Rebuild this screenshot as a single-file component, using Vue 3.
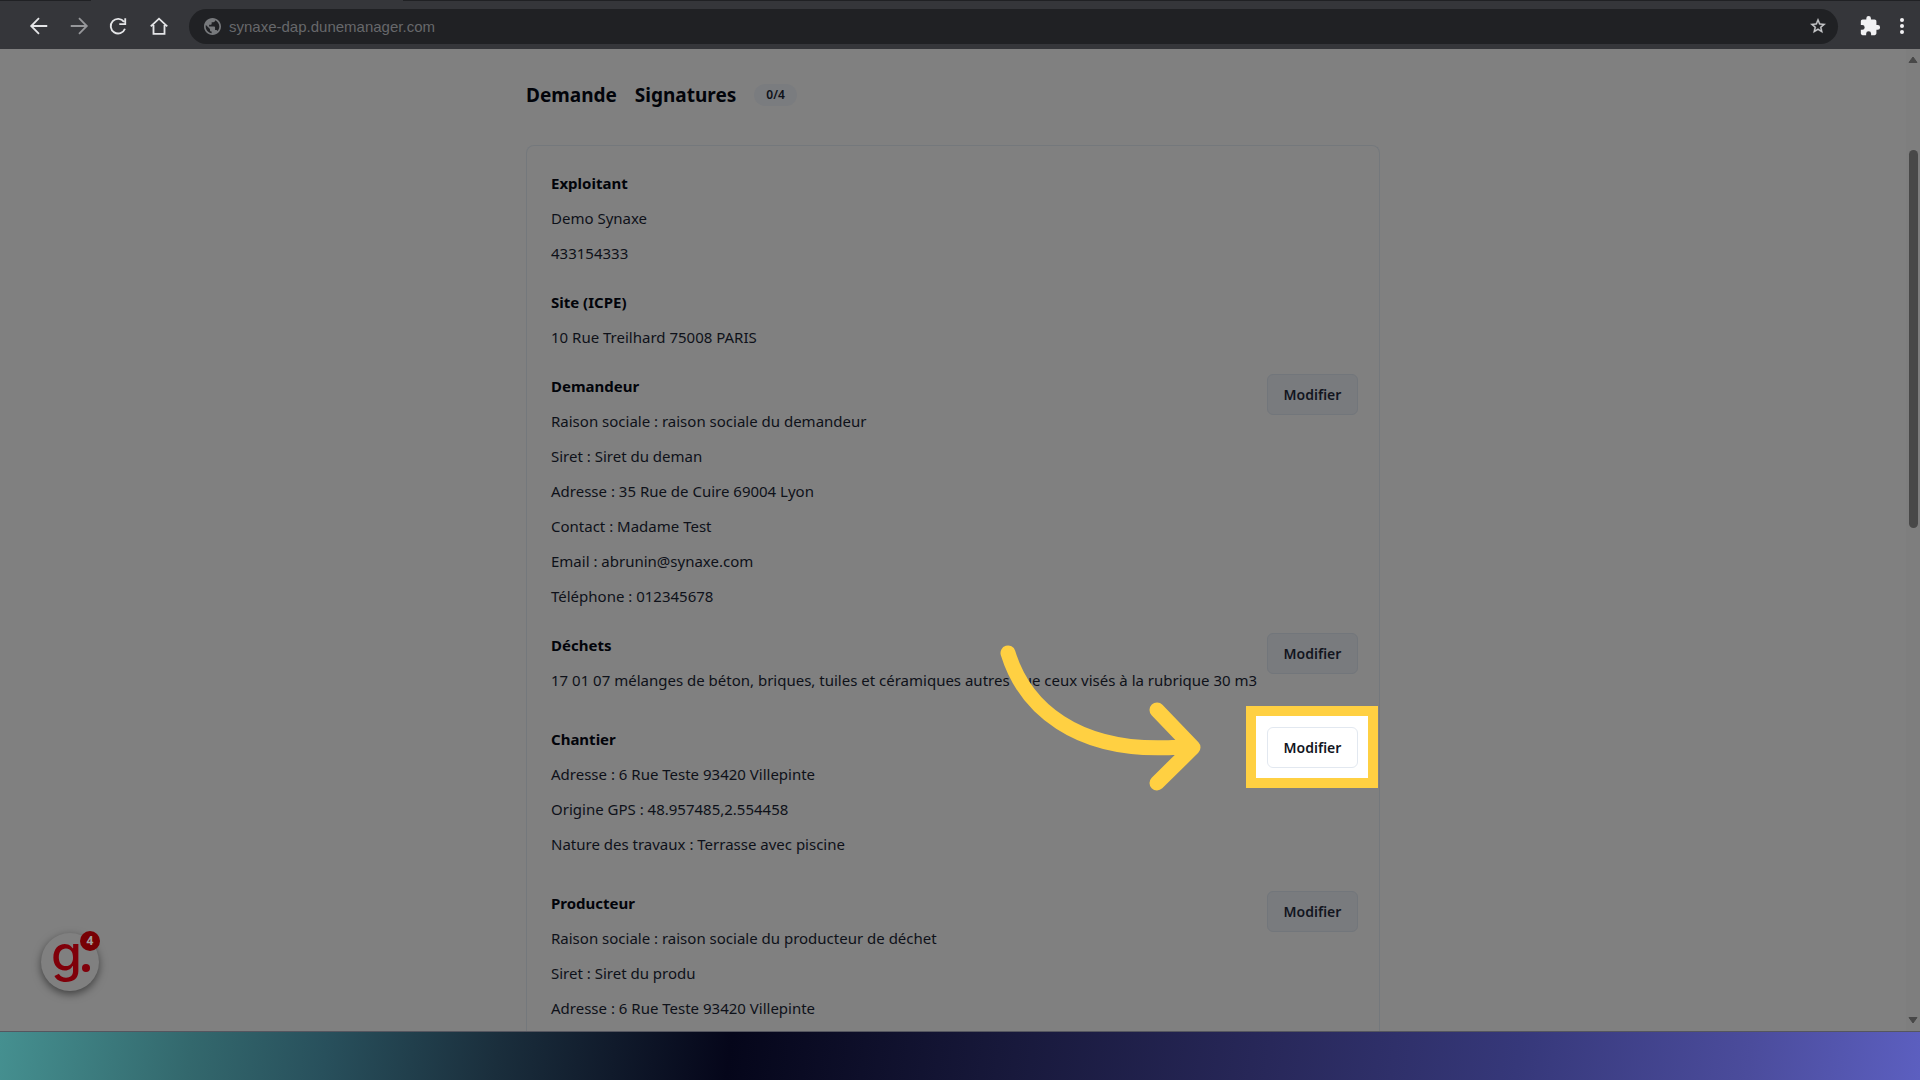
<script setup>
import { ref } from "vue";

const url = ref("synaxe-dap.dunemanager.com");

const sections = ref([
  {
    title: "Exploitant",
    lines: ["Demo Synaxe", "433154333"],
  },
  {
    title: "Site (ICPE)",
    lines: ["10 Rue Treilhard 75008 PARIS"],
  },
  {
    title: "Demandeur",
    editable: true,
    lines: [
      "Raison sociale : raison sociale du demandeur",
      "Siret : Siret du deman",
      "Adresse : 35 Rue de Cuire 69004 Lyon",
      "Contact : Madame Test",
      "Email : abrunin@synaxe.com",
      "Téléphone : 012345678",
    ],
  },
  {
    title: "Déchets",
    editable: true,
    spaced: true,
    lines: ["17 01 07 mélanges de béton, briques, tuiles et céramiques autres que ceux visés à la rubrique 30 m3"],
  },
  {
    title: "Chantier",
    editable: true,
    spaced: true,
    active: true,
    lines: [
      "Adresse : 6 Rue Teste 93420 Villepinte",
      "Origine GPS : 48.957485,2.554458",
      "Nature des travaux : Terrasse avec piscine",
    ],
  },
  {
    title: "Producteur",
    editable: true,
    lines: [
      "Raison sociale : raison sociale du producteur de déchet",
      "Siret : Siret du produ",
      "Adresse : 6 Rue Teste 93420 Villepinte",
    ],
  },
]);
</script>

<template>
  <div class="screen">
    <header class="toolbar">
      <nav class="nav">
        <button class="icon-btn" aria-label="Back">
          <svg viewBox="0 0 24 24"><path d="M21 12H4M12 3.500L3.500 12l8.500 8.500" /></svg>
        </button>
        <button class="icon-btn muted" aria-label="Forward">
          <svg viewBox="0 0 24 24"><path d="M3 12h17M12 3.500l8.500 8.500-8.500 8.500" /></svg>
        </button>
        <button class="icon-btn" aria-label="Reload">
          <svg viewBox="0 0 24 24"><path d="M17.500 7.500A8 8 0 1 0 18.500 15M18.800 3.500v6.500h-6.500" /></svg>
        </button>
        <button class="icon-btn" aria-label="Home">
          <svg viewBox="0 0 24 24"><path d="M3 12.500L12 4l9 8.500M6 11v9.500h12V11" /></svg>
        </button>
      </nav>
      <div class="address">
        <svg class="globe" viewBox="2 2 20 20">
          <path d="M12 2C6.480 2 2 6.480 2 12s4.480 10 10 10 10-4.480 10-10S17.520 2 12 2zm-1 17.930c-3.950-.49-7-3.850-7-7.930 0-.62.080-1.210.210-1.790L9 15v1c0 1.100.9 2 2 2v1.930zm6.900-2.540c-.26-.81-1-1.390-1.900-1.390h-1v-3c0-.55-.45-1-1-1H8v-2h2c.55 0 1-.45 1-1V7h2c1.100 0 2-.9 2-2v-.41c2.930 1.190 5 4.060 5 7.410 0 2.080-.8 3.970-2.100 5.390z" />
        </svg>
        <input v-model="url" type="text" class="url" aria-label="Address" />
        <button class="star" aria-label="Bookmark">
          <svg viewBox="0 0 24 24">
            <path d="M22 9.240l-7.190-.62L12 2 9.190 8.630 2 9.240l5.460 4.730L5.820 21 12 17.270 18.180 21l-1.630-7.030L22 9.240zM12 15.400l-3.760 2.270 1-4.280-3.320-2.880 4.380-.38L12 6.100l1.710 4.040 4.380.38-3.320 2.880 1 4.280L12 15.400z" />
          </svg>
        </button>
      </div>
      <button class="tool-btn" aria-label="Extensions">
        <svg class="puzzle" viewBox="0 0 24 24">
          <path d="M20.500 11H19V7c0-1.100-.9-2-2-2h-4V3.500a2.500 2.500 0 0 0-5 0V5H4c-1.100 0-2 .9-2 2v3.800h1.500a2.700 2.700 0 0 1 0 5.400H2V20c0 1.100.9 2 2 2h3.800v-1.500a2.700 2.700 0 0 1 5.400 0V22H17c1.100 0 2-.9 2-2v-4h1.500a2.500 2.500 0 0 0 0-5z" />
        </svg>
      </button>
      <button class="tool-btn" aria-label="Menu">
        <svg class="dots" viewBox="0 0 6 20">
          <circle cx="3" cy="4" r="2" /><circle cx="3" cy="10" r="2" /><circle cx="3" cy="16" r="2" />
        </svg>
      </button>
    </header>

    <div class="page">
      <main class="content">
        <nav class="tabs">
          <a href="#demande">Demande</a>
          <a href="#signatures">Signatures</a>
          <span class="count">0/4</span>
        </nav>

        <div class="card">
          <section v-for="section in sections" :key="section.title" class="section" :class="{ spaced: section.spaced }">
            <div class="text">
              <h2>{{ section.title }}</h2>
              <p v-for="line in section.lines" :key="line">{{ line }}</p>
            </div>
            <div v-if="section.editable" class="action" :class="{ active: section.active }">
              <button class="edit">Modifier</button>
              <svg v-if="section.active" class="arrow" viewBox="0 0 200 146">
                <path d="M8 8C24 60 74 110 180 102M157 65l36 37.500-36 35.500" />
              </svg>
            </div>
          </section>
        </div>
      </main>

      <div class="scrollbar">
        <svg class="tri" viewBox="0 0 10 8"><path d="M5 1L9 6.500H1z" /></svg>
        <div class="track"><div class="thumb"></div></div>
        <svg class="tri" viewBox="0 0 10 8"><path d="M5 7L1 1.500h8z" /></svg>
      </div>

      <button class="widget" aria-label="Guides">
        <span class="letter">g</span>
        <span class="dot"></span>
        <span class="badge">4</span>
      </button>
    </div>

    <footer class="backdrop"></footer>
  </div>
</template>

<style>
body {
  background: #808080;
}
</style>

<style scoped>
.screen {
  min-height: 100vh;
  display: flex;
  flex-direction: column;
  font-family: "Noto Sans", "Open Sans", sans-serif;
  color: #0e1119;
}

button {
  font-family: inherit;
  padding: 0;
  border: 0;
  background: none;
  cursor: pointer;
}

/* browser toolbar */
.toolbar {
  display: flex;
  align-items: center;
  height: 49px;
  padding: 3px 10px 0 24px;
  box-sizing: border-box;
  background:
    linear-gradient(90deg, #202124 91px, transparent 91px, transparent 403px, #202124 403px) top / 100% 1px no-repeat,
    #35363a;
}

.nav {
  display: flex;
  gap: 10px;
  margin-right: 15px;
}

.icon-btn {
  display: flex;
  align-items: center;
  justify-content: center;
  width: 30px;
  height: 30px;
}

.icon-btn svg {
  width: 22px;
  height: 22px;
  fill: none;
  stroke: #e4e5e7;
  stroke-width: 2;
}

.icon-btn.muted svg {
  stroke: #96979a;
}

.address {
  flex: 1;
  display: flex;
  align-items: center;
  height: 35px;
  padding: 0 11px 0 15px;
  box-sizing: border-box;
  border-radius: 18px;
  background: #202124;
}

.globe {
  width: 17px;
  height: 17px;
  fill: #77797c;
}

.url {
  flex: 1;
  min-width: 0;
  margin-left: 8px;
  padding: 0;
  border: 0;
  outline: 0;
  background: none;
  font-family: "Liberation Sans", sans-serif;
  font-size: 15px;
  color: #67686b;
}

.star svg {
  display: block;
  width: 18px;
  height: 18px;
  fill: #c8c9cb;
  stroke: #c8c9cb;
  stroke-width: 0.5;
}

.tool-btn {
  display: flex;
  justify-content: center;
  width: 24px;
  margin-left: 20px;
}

.tool-btn + .tool-btn {
  width: 16px;
  margin-left: 12px;
}

.puzzle {
  width: 22px;
  height: 22px;
  fill: #f1f1f3;
}

.dots {
  width: 6px;
  height: 20px;
  fill: #f1f1f3;
}

/* page */
.page {
  position: relative;
  flex: 1;
  display: flex;
  background: #808080;
  border-bottom: 1px solid #55565f;
}

.content {
  flex: 1;
  max-width: 854px;
  margin: 0 auto;
  display: flex;
  flex-direction: column;
}

.tabs {
  display: flex;
  align-items: center;
  gap: 18px;
  height: 28px;
  padding: 32px 0 36px;
}

.tabs a {
  font-size: 19px;
  font-weight: 700;
  color: #02040a;
  text-decoration: none;
}

.count {
  padding: 0 12px;
  border-radius: 11px;
  background: #7a7c7f;
  font-size: 12px;
  font-weight: 600;
  line-height: 22px;
}

.card {
  flex: 1;
  padding: 20px 21px 4px 24px;
  border: 1px solid #74787c;
  border-bottom: 0;
  border-radius: 8px 8px 0 0;
}

.section {
  position: relative;
  padding-bottom: 14px;
}

.section.spaced {
  padding-bottom: 24px;
}

.section:last-child {
  padding-bottom: 0;
}

h2,
p {
  margin: 0;
  font-size: 15px;
  line-height: 35px;
}

h2 {
  font-weight: 700;
  color: #02040a;
}

p {
  font-weight: 400;
}

/* sits over the text so that a long line can run below it */
.action {
  position: absolute;
  top: 5px;
  right: 0;
}

.edit {
  position: relative;
  display: block;
  width: 91px;
  height: 41px;
  border: 1px solid #72767b;
  border-radius: 6px;
  background: #797b7e;
  font-size: 14px;
  font-weight: 600;
  color: #12151e;
}

.active::before {
  content: "";
  position: absolute;
  inset: -21px -20px -20px -21px;
  border: 10px solid #ffd042;
  background: #fff;
}

.active .edit {
  border-color: #e2e8f0;
  background: #fff;
}

.arrow {
  position: absolute;
  top: -82px;
  right: 158px;
  width: 200px;
  height: 146px;
  overflow: visible;
  fill: none;
  stroke: #ffd042;
  stroke-width: 15;
  stroke-linecap: round;
  stroke-linejoin: round;
}

.scrollbar {
  display: flex;
  flex-direction: column;
  align-items: center;
  width: 14px;
  padding: 7px 0;
  background: #7e7e7e;
}

.tri {
  width: 10px;
  height: 8px;
  fill: #484848;
  stroke: #484848;
  stroke-width: 1;
  stroke-linejoin: round;
}

.track {
  flex: 1;
  display: flex;
  flex-direction: column;
}

.track::before {
  content: "";
  flex: 86;
}

.track::after {
  content: "";
  flex: 487;
}

.thumb {
  flex: 377;
  width: 9px;
  border-radius: 5px;
  background: #484848;
}

/* floating guide button */
.widget {
  position: absolute;
  left: 41px;
  bottom: 40px;
  width: 58px;
  height: 58px;
  padding: 0 0 18px 10px;
  border-radius: 50%;
  background: #808080;
  box-shadow: 0 3px 8px rgba(0, 0, 0, 0.5);
  text-align: left;
}

.letter {
  display: block;
  font-family: "Inter", sans-serif;
  font-size: 50px;
  font-weight: 500;
  line-height: 40px;
  color: #80000a;
}

.dot {
  position: absolute;
  right: 9px;
  bottom: 19px;
  width: 8px;
  height: 8px;
  border-radius: 50%;
  background: #80000a;
}

.badge {
  position: absolute;
  top: -2px;
  right: -1px;
  width: 20px;
  height: 20px;
  border-radius: 50%;
  background: #780004;
  font-size: 12px;
  font-weight: 700;
  line-height: 20px;
  text-align: center;
  color: #a0a0a0;
}

.backdrop {
  height: 48px;
  background: linear-gradient(
    97deg,
    #459090 0%,
    #33686d 10%,
    #28505c 17%,
    #1a2e3c 26%,
    #101a2b 32%,
    #05061a 38%,
    #17183a 52%,
    #28285a 66%,
    #36387a 79%,
    #4b4c9c 91%,
    #5c5fc0 100%
  );
}
</style>
